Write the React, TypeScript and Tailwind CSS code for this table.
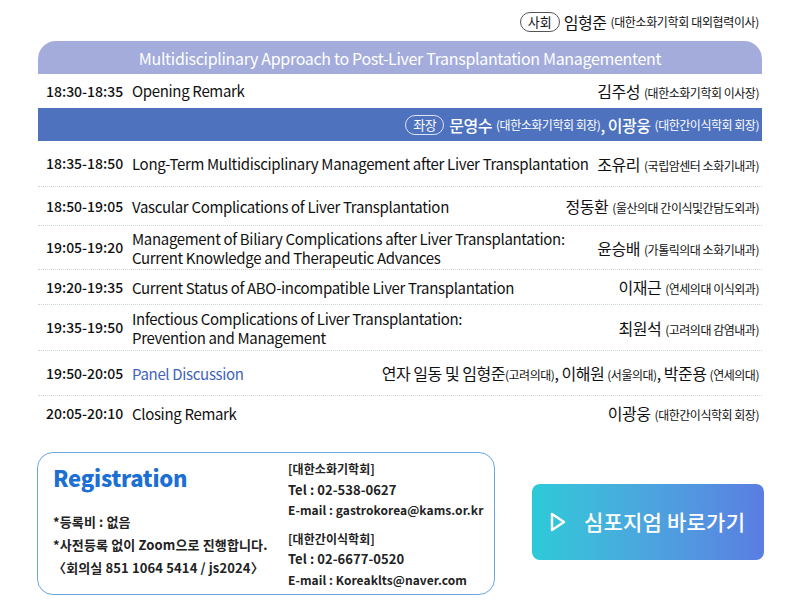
import React from 'react';

const FONT = { fontFamily: '"Noto Sans CJK KR", "Noto Sans", sans-serif' };

interface Session {
  time: string;
  title: string[];
  speaker?: React.ReactNode;
  height: string;
  blue?: boolean;
  last?: boolean;
}

const Name = ({ name, org }: { name: string; org: string }) => (
  <span>
    <span className="text-[16px]">{name}</span>
    <span className="text-[12px] ml-[4px]">({org})</span>
  </span>
);

const sessions: Session[] = [
  {
    time: '18:35-18:50',
    title: ['Long-Term Multidisciplinary Management after Liver Transplantation'],
    speaker: <Name name="조유리" org="국립암센터 소화기내과" />,
    height: 'h-[46px]',
  },
  {
    time: '18:50-19:05',
    title: ['Vascular Complications of Liver Transplantation'],
    speaker: <Name name="정동환" org="울산의대 간이식및간담도외과" />,
    height: 'h-[39px]',
  },
  {
    time: '19:05-19:20',
    title: ['Management of Biliary Complications after Liver Transplantation:', 'Current Knowledge and Therapeutic Advances'],
    speaker: <Name name="윤승배" org="가톨릭의대 소화기내과" />,
    height: 'h-[44px]',
  },
  {
    time: '19:20-19:35',
    title: ['Current Status of ABO-incompatible Liver Transplantation'],
    speaker: <Name name="이재근" org="연세의대 이식외과" />,
    height: 'h-[35px]',
  },
  {
    time: '19:35-19:50',
    title: ['Infectious Complications of Liver Transplantation:', 'Prevention and Management'],
    speaker: <Name name="최원석" org="고려의대 감염내과" />,
    height: 'h-[46px]',
  },
  {
    time: '19:50-20:05',
    title: ['Panel Discussion'],
    blue: true,
    speaker: (
      <span>
        <span className="text-[16px]">연자 일동 및 임형준</span>
        <span className="text-[12px]">(고려의대)</span>
        <span className="text-[16px]">, 이해원 </span>
        <span className="text-[12px]">(서울의대)</span>
        <span className="text-[16px]">, 박준용 </span>
        <span className="text-[12px]">(연세의대)</span>
      </span>
    ),
    height: 'h-[45px]',
  },
  {
    time: '20:05-20:10',
    title: ['Closing Remark'],
    speaker: <Name name="이광웅" org="대한간이식학회 회장" />,
    height: 'h-[34px]',
    last: true,
  },
];

const Row = ({ s }: { s: Session }) => (
  <div
    className={`flex items-center ${s.height} ${s.last ? '' : 'border-b border-dotted border-[#c9d6d6]'} text-[#111]`}
  >
    <div className="w-[94px] pl-[8px] text-[14px] font-medium shrink-0">{s.time}</div>
    <div
      className={`flex-1 text-[15px] leading-[19px] tracking-[-0.022em] ${s.blue ? 'text-[#3f63b8]' : ''}`}
    >
      {s.title.map((t) => (
        <div key={t}>{t}</div>
      ))}
    </div>
    <div className="pr-[3px] tracking-[-0.03em] whitespace-nowrap">{s.speaker}</div>
  </div>
);

const PlayIcon = () => (
  <svg width="16" height="20" viewBox="0 0 16 20" fill="none">
    <path d="M2 2 L14 10 L2 18 Z" stroke="white" strokeWidth="2.4" strokeLinejoin="round" />
  </svg>
);

export default function App() {
  return (
    <div className="w-[800px] h-[616px] bg-white overflow-hidden" style={FONT}>
      <div className="px-[38px]">
        {/* 사회 */}
        <div className="h-[41px] flex items-center justify-end pr-[3px] pt-[3px] text-[#111]">
          <span className="border border-[#555] rounded-full px-[7px] h-[20px] flex items-center text-[13px] mr-[4px]">
            사회
          </span>
          <span className="text-[16px] tracking-[-0.03em]">임형준</span>
          <span className="text-[12px] ml-[4px] tracking-[-0.03em]">(대한소화기학회 대외협력이사)</span>
        </div>

        {/* title bar */}
        <div className="h-[33px] rounded-t-[18px] bg-[#a3acdb] flex items-center justify-center text-white text-[16px] tracking-[-0.02em]">
          Multidisciplinary Approach to Post-Liver Transplantation Managementent
        </div>

        {/* opening */}
        <div className="flex items-center h-[34px] text-[#111]">
          <div className="w-[94px] pl-[8px] text-[14px] font-medium shrink-0">18:30-18:35</div>
          <div className="flex-1 text-[15px] tracking-[-0.022em]">Opening Remark</div>
          <div className="pr-[3px] tracking-[-0.03em]">
            <Name name="김주성" org="대한소화기학회 이사장" />
          </div>
        </div>

        {/* chair bar */}
        <div className="h-[33px] bg-[#4e72be] flex items-center justify-end pr-[3px] text-white tracking-[-0.03em]">
          <span className="border border-white/80 rounded-full px-[7px] h-[20px] flex items-center text-[13px] mr-[5px]">
            좌장
          </span>
          <span className="text-[16px] font-medium">문영수</span>
          <span className="text-[12px] ml-[4px]">(대한소화기학회 회장)</span>
          <span className="text-[16px] font-medium">, 이광웅</span>
          <span className="text-[12px] ml-[4px]">(대한간이식학회 회장)</span>
        </div>

        {sessions.map((s) => (
          <Row key={s.time} s={s} />
        ))}
      </div>

      {/* bottom */}
      <div className="flex items-start mt-[22px] pl-[37px]">
        <div className="w-[458px] h-[143px] border border-[#6aa6e2] rounded-[16px] flex">
          <div className="w-[250px] pl-[15px] pt-[9px] flex flex-col">
            <div className="text-[22px] font-black text-[#1c6fd3] tracking-[-0.01em] leading-[30px]">Registration</div>
            <div className="mt-[18px] text-[13px] font-bold text-[#222] leading-[23px] tracking-[0.01em]">
              <div>*등록비 : 없음</div>
              <div>*사전등록 없이 Zoom으로 진행합니다.</div>
              <div>〈회의실 851 1064 5414 / js2024〉</div>
            </div>
          </div>
          <div className="pt-[6px] text-[12px] font-bold text-[#222] leading-[20.5px] tracking-[0.005em]">
            <div>[대한소화기학회]</div>
            <div className="text-[13px]">Tel : 02-538-0627</div>
            <div>E-mail : gastrokorea@kams.or.kr</div>
            <div className="mt-[8px]">[대한간이식학회]</div>
            <div className="text-[13px]">Tel : 02-6677-0520</div>
            <div>E-mail : Koreaklts@naver.com</div>
          </div>
        </div>

        <div className="ml-[37px] mt-[32px] w-[232px] h-[76px] rounded-[8px] bg-gradient-to-r from-[#2bcad8] to-[#5a7de2] flex items-center pl-[18px] text-white">
          <PlayIcon />
          <span className="ml-[18px] text-[21px] font-medium tracking-[0.01em]">심포지엄 바로가기</span>
        </div>
      </div>
    </div>
  );
}
